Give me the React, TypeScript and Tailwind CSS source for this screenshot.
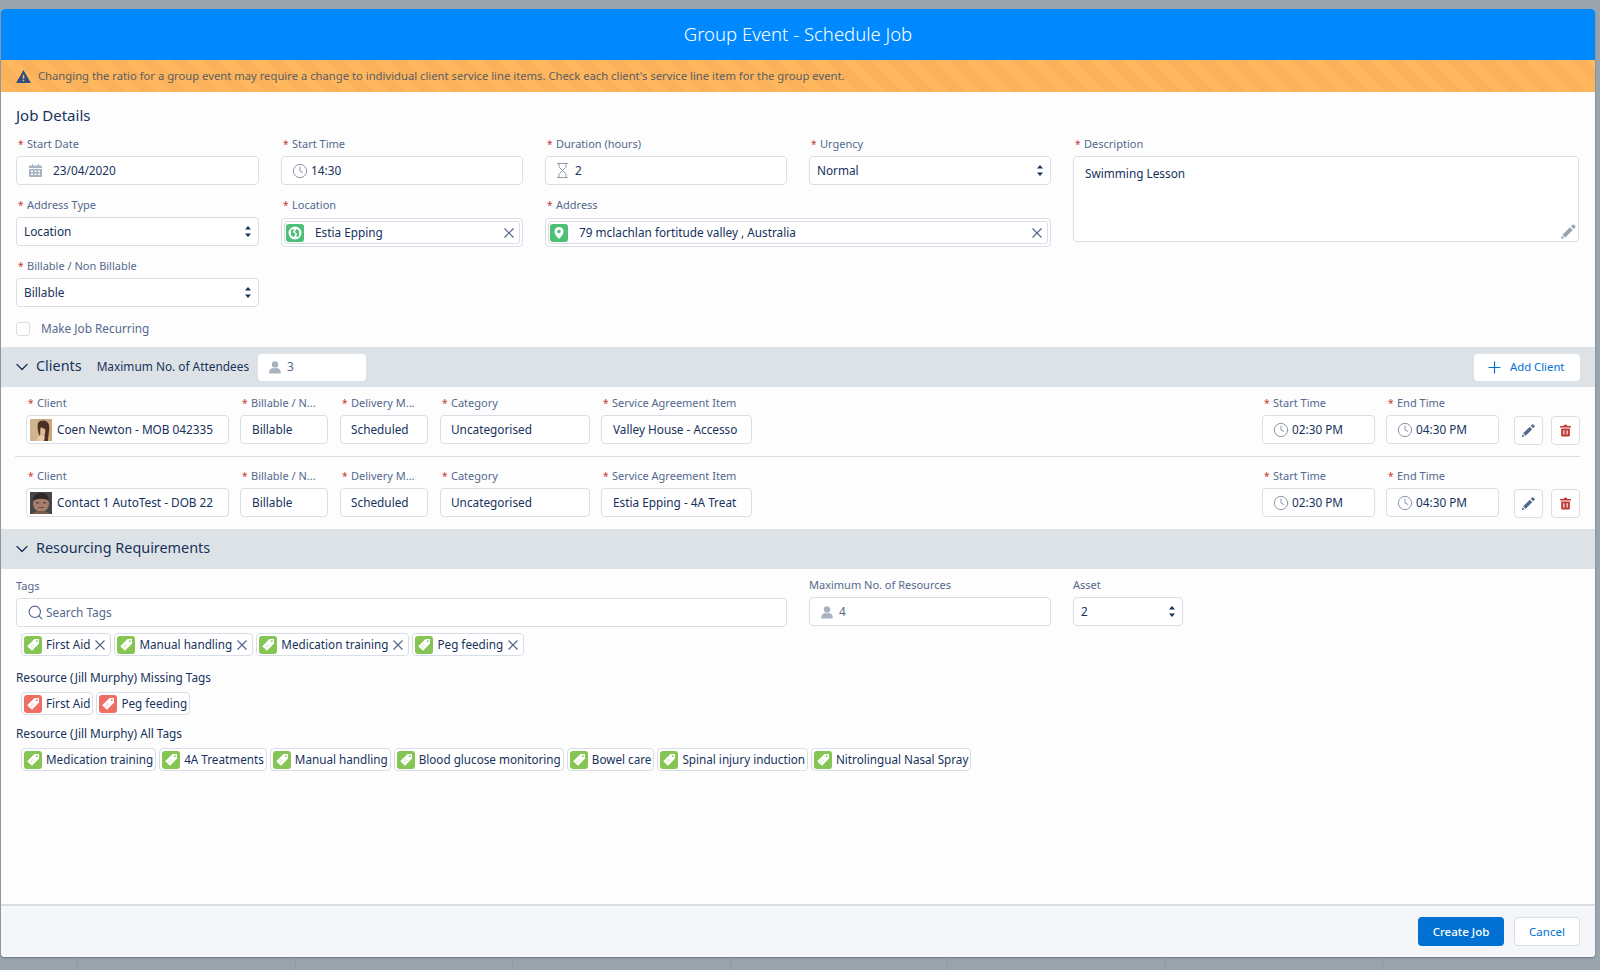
import { ChevronDown, Clock, Hourglass, Plus, Search } from "lucide-react";
import type { ReactNode } from "react";

function UserIcon({ className = "" }: { className?: string }) {
  return (
    <svg viewBox="0 0 24 24" className={className} fill="#a8b3c1">
      <circle cx="12" cy="7.500" r="5.500" />
      <path d="M2 22c0-5 2.500-7.500 7-8.500 1.800 1 4.200 1 6 0 4.500 1 7 3.500 7 8.500 0 .8-.5 1.200-1.200 1.200H3.200C2.500 23.200 2 22.800 2 22z" />
    </svg>
  );
}

function CloseIcon() {
  return (
    <svg viewBox="0 0 10 10" className="h-[10px] w-[10px] shrink-0" stroke="#54698d" strokeWidth="1.200" fill="none">
      <path d="M.5.5l9 9M9.500.5l-9 9" />
    </svg>
  );
}

function CalendarIcon() {
  return (
    <svg viewBox="0 0 13 13" className="h-[13px] w-[13px] shrink-0" fill="#a8b3c1">
      <path d="M3 0h1v1.500h5V0h1v1.500h2a1 1 0 0 1 1 1V4H0V2.500a1 1 0 0 1 1-1h2z" />
      <path d="M0 5h13v7a1 1 0 0 1-1 1H1a1 1 0 0 1-1-1z" />
      <path d="M2 6.500h2v1.500H2zM5.500 6.500h2v1.500h-2zM9 6.500h2v1.500H9zM2 9.500h2V11H2zM5.500 9.500h2V11h-2zM9 9.500h2V11H9z" fill="#fff" />
    </svg>
  );
}

function TagIcon({ color }: { color: string }) {
  return (
    <span className="flex h-[18px] w-[18px] shrink-0 items-center justify-center rounded-[3px]" style={{ backgroundColor: color }}>
      <svg viewBox="0 0 18 18" className="h-[18px] w-[18px]">
        <path d="M10.500 3 15 3 15 7.500 8 14.800 3.200 10.200z" fill="#fff" />
        <circle cx="12.800" cy="5.200" r="0.900" fill={color} />
        <path d="M6.800 10.200l1 1M8.400 8.600l1 1" stroke={color} strokeWidth="1" />
      </svg>
    </span>
  );
}

function Arrows() {
  return (
    <svg viewBox="0 0 6 13" className="h-[13px] w-[6px] shrink-0" fill="#16325c">
      <path d="M3 1 6 4.500H0zM3 12 0 8.500h6z" />
    </svg>
  );
}

function PencilIcon({ className = "" }: { className?: string }) {
  return (
    <svg viewBox="0 0 24 24" className={className} fill="currentColor">
      <path d="M17.500 2.500a1.500 1.500 0 0 1 2.100 0l1.900 1.900a1.500 1.500 0 0 1 0 2.100l-2 2-4-4zM14 6l4 4L7.500 20.500l-4-4zM2.700 18l3.300 3.300-4 1c-.4.100-.6-.1-.5-.5z" />
    </svg>
  );
}

function TrashIcon() {
  return (
    <svg viewBox="0 0 24 24" className="h-[13px] w-[13px]" fill="#c23934">
      <path d="M9 1.500h6V3.500h7V6.500H2V3.500h7zM4 8.500h16V21a2 2 0 0 1-2 2H6a2 2 0 0 1-2-2z" />
      <path d="M8 11.500h2v8H8zM14 11.500h2v8h-2z" fill="#fff" />
    </svg>
  );
}

function FieldLabel({ children, required = true }: { children: ReactNode; required?: boolean }) {
  return (
    <div className="flex h-[23px] items-center whitespace-nowrap pb-px text-[11px] text-[#54698d]">
      {required && <span className="w-[11px] pl-[2px] text-[10px] text-[#c23934]">*</span>}
      {children}
    </div>
  );
}

function Box({ children, className = "" }: { children?: ReactNode; className?: string }) {
  return (
    <div className={`flex h-[29px] items-center overflow-hidden whitespace-nowrap rounded-[4px] border border-[#d8dde6] bg-white text-[11.800px] text-[#16325c] ${className}`}>
      {children}
    </div>
  );
}

function Select({ value }: { value: string }) {
  return (
    <Box className="justify-between pl-[7px] pr-[7px]">
      {value}
      <Arrows />
    </Box>
  );
}

function Lookup({ icon, value }: { icon: ReactNode; value: string }) {
  return (
    <div className="-mb-px mt-px h-[29px] rounded-[4px] border border-[#d8dde6] bg-white p-[2px]">
      <div className="flex h-full items-center rounded-[3px] border border-[#d8dde6] pl-[1px] pr-[5px] text-[11.800px] text-[#16325c]">
        <span className="flex h-[18px] w-[18px] shrink-0 items-center justify-center rounded-[3px] bg-[#4bc076]">{icon}</span>
        <span className="ml-[11px] flex-1">{value}</span>
        <CloseIcon />
      </div>
    </div>
  );
}

function Tag({ label, color = "#84c553", removable = false }: { label: string; color?: string; removable?: boolean }) {
  return (
    <div className="flex h-[23px] items-center rounded-[4px] border border-[#d8dde6] bg-white pl-[2px] pr-[2px] text-[11.700px] text-[#16325c]">
      <TagIcon color={color} />
      <span className="ml-[4px] whitespace-nowrap">{label}</span>
      {removable && (
        <span className="ml-[5px] mr-[3px]">
          <CloseIcon />
        </span>
      )}
    </div>
  );
}

function SectionBar({ title, children }: { title: string; children?: ReactNode }) {
  return (
    <div className="flex h-[40px] shrink-0 items-center bg-[#dde2e6] pl-[11px] pr-[15px]">
      <ChevronDown className="h-[20px] w-[20px] text-[#16325c]" strokeWidth={1.500} />
      <span className="ml-[4px] pb-[2px] text-[14.400px] text-[#16325c]">{title}</span>
      {children}
    </div>
  );
}

function Avatar({ kind }: { kind: "woman" | "man" }) {
  if (kind === "woman") {
    return (
      <svg viewBox="0 0 22 22" className="h-[22px] w-[22px] shrink-0">
        <rect width="22" height="22" fill="#c9a67c" />
        <path d="M0 0h8v22H0z" fill="#d2b48c" />
        <path d="M8 4c3-4 10-3 11 2 1 5-1 10-1 16h-5c1-3 3-8 2-12-2 0-3-1-4-2-1 4-1 6-1 9-2-3-3-9-2-13z" fill="#4a2f26" />
        <path d="M11 8c1 1 2 2 4 2 .5 3-.5 6-2 6s-3-3-2-8z" fill="#e4b899" />
        <path d="M7 22c0-4 2-6 5-6s3 3 2 6z" fill="#e9c7ab" />
      </svg>
    );
  }
  return (
    <svg viewBox="0 0 22 22" className="h-[22px] w-[22px] shrink-0">
      <rect width="22" height="22" fill="#45464a" />
      <ellipse cx="11" cy="11.500" rx="8" ry="8.500" fill="#a67f6d" />
      <path d="M3 9c0-6 4-8 8-8s8 2 8 8c-4-3-12-3-16 0z" fill="#2f2a29" />
      <path d="M6 10h3v1.500H6zM13 10h3v1.500h-3z" fill="#5c463d" />
      <path d="M8 15h6v1H8z" fill="#6e4e42" />
      <path d="M2 22c1-2 4-3 9-3s8 1 9 3z" fill="#7d5c50" />
    </svg>
  );
}

const clients = [
  { name: "Coen Newton - MOB 042335", item: "Valley House - Accesso", kind: "woman" as const },
  { name: "Contact 1 AutoTest - DOB 22", item: "Estia Epping - 4A Treat", kind: "man" as const },
];

const selectedTags = ["First Aid", "Manual handling", "Medication training", "Peg feeding"];
const missingTags = ["First Aid", "Peg feeding"];
const allTags = [
  "Medication training",
  "4A Treatments",
  "Manual handling",
  "Blood glucose monitoring",
  "Bowel care",
  "Spinal injury induction",
  "Nitrolingual Nasal Spray",
];

const backdropCells = [1, 2, 3, 4, 5, 6, 7];

function ClientRow({ name, item, kind }: { name: string; item: string; kind: "woman" | "man" }) {
  return (
    <div className="flex pl-[11px]">
      <div className="w-[203px]">
        <FieldLabel>Client</FieldLabel>
        <Box className="pl-[3px]">
          <Avatar kind={kind} />
          <span className="ml-[5px] w-[157px] overflow-hidden">{name}</span>
        </Box>
      </div>
      <div className="ml-[11px] w-[88px]">
        <FieldLabel>Billable / N...</FieldLabel>
        <Box className="pl-[11px]">Billable</Box>
      </div>
      <div className="ml-[12px] w-[88px]">
        <FieldLabel>Delivery M...</FieldLabel>
        <Box className="pl-[10px]">Scheduled</Box>
      </div>
      <div className="ml-[12px] w-[150px]">
        <FieldLabel>Category</FieldLabel>
        <Box className="pl-[10px]">Uncategorised</Box>
      </div>
      <div className="ml-[11px] w-[151px]">
        <FieldLabel>Service Agreement Item</FieldLabel>
        <Box className="pl-[11px]">
          <span className="w-[127px] overflow-hidden">{item}</span>
        </Box>
      </div>
      <div className="ml-[510px] w-[113px]">
        <FieldLabel>Start Time</FieldLabel>
        <Box className="pl-[10px]">
          <Clock className="mr-[3px] h-[16px] w-[16px] text-[#8a96a8]" strokeWidth={1.500} />
          02:30 PM
        </Box>
      </div>
      <div className="ml-[11px] w-[113px]">
        <FieldLabel>End Time</FieldLabel>
        <Box className="pl-[10px]">
          <Clock className="mr-[3px] h-[16px] w-[16px] text-[#8a96a8]" strokeWidth={1.500} />
          04:30 PM
        </Box>
      </div>
      <div className="ml-[15px] mt-[24px] flex h-[29px] w-[29px] items-center justify-center rounded-[4px] border border-[#d8dde6] bg-white text-[#54698d]">
        <PencilIcon className="h-[15px] w-[15px]" />
      </div>
      <div className="ml-[8px] mt-[24px] flex h-[29px] w-[29px] items-center justify-center rounded-[4px] border border-[#d8dde6] bg-white">
        <TrashIcon />
      </div>
    </div>
  );
}

export default function App() {
  return (
    <div className="flex h-[970px] w-[1600px] flex-col overflow-hidden bg-[#9aa4ad] pt-[9px] pl-px font-['Noto_Sans','Liberation_Sans',sans-serif]">
      <div className="flex h-[948px] w-[1594px] shrink-0 flex-col overflow-hidden rounded-[4px] bg-[#fdfdfd] shadow-[0_1px_2px_rgba(0,0,0,0.3)]">
        <div className="flex h-[51px] shrink-0 items-center justify-center bg-[#0089ff] pb-px text-[18.500px] font-light text-white">
          Group Event - Schedule Job
        </div>
        <div className="flex h-[32px] shrink-0 items-center bg-[repeating-linear-gradient(45deg,#ffb75d_0,#ffb75d_11px,#f9b15c_11px,#f9b15c_22px)] pl-[15px] text-[11.250px] text-[#5b5d63]">
          <svg viewBox="0 0 16 14" className="mr-[7px] h-[13px] w-[15px]">
            <path d="M8 0 16 14H0z" fill="#2f4f7f" />
            <path d="M7.200 5h1.600v4.500H7.200zM7.200 10.500h1.600V12H7.200z" fill="#ffb75d" />
          </svg>
          Changing the ratio for a group event may require a change to individual client service line items. Check each client's service line item for the group event.
        </div>

        {/* Job Details */}
        <div className="shrink-0 pl-[15px]">
          <div className="pt-[11px] text-[15px] leading-[24px] text-[#16325c]">Job Details</div>
          <div className="mt-[6px] grid grid-cols-[243px_242px_242px_242px_506px] gap-x-[22px] gap-y-[9px]">
            <div>
              <FieldLabel>Start Date</FieldLabel>
              <Box className="pl-[12px]">
                <span className="mr-[11px]">
                  <CalendarIcon />
                </span>
                23/04/2020
              </Box>
            </div>
            <div>
              <FieldLabel>Start Time</FieldLabel>
              <Box className="pl-[10px]">
                <Clock className="mr-[3px] h-[16px] w-[16px] text-[#8a96a8]" strokeWidth={1.500} />
                14:30
              </Box>
            </div>
            <div>
              <FieldLabel>Duration (hours)</FieldLabel>
              <Box className="pl-[8px]">
                <Hourglass className="mr-[4px] h-[17px] w-[17px] text-[#8a96a8]" strokeWidth={1.400} />2
              </Box>
            </div>
            <div>
              <FieldLabel>Urgency</FieldLabel>
              <Select value="Normal" />
            </div>
            <div className="row-span-2">
              <FieldLabel>Description</FieldLabel>
              <div className="relative h-[86px] rounded-[4px] border border-[#d8dde6] bg-white pl-[11px] pt-[8px] text-[11.800px] text-[#16325c]">
                Swimming Lesson
                <PencilIcon className="absolute bottom-[1px] right-[1px] h-[17px] w-[17px] text-[#9aa4b2]" />
              </div>
            </div>
            <div>
              <FieldLabel>Address Type</FieldLabel>
              <Select value="Location" />
            </div>
            <div>
              <FieldLabel>Location</FieldLabel>
              <Lookup
                value="Estia Epping"
                icon={
                  <svg viewBox="0 0 18 18" className="h-[18px] w-[18px]">
                    <circle cx="9" cy="9" r="6.500" fill="#fff" />
                    <path d="M5 5.500h3.500L6.800 8l2.700 2-1.500 3-3-1.500zM13 12.500H9.800L11.300 10 8.800 8l1.500-3 2.700 1.500z" fill="#4bc076" />
                  </svg>
                }
              />
            </div>
            <div className="col-span-2">
              <FieldLabel>Address</FieldLabel>
              <Lookup
                value="79 mclachlan fortitude valley , Australia"
                icon={
                  <svg viewBox="0 0 18 18" className="h-[18px] w-[18px]">
                    <path d="M9 3a4.500 4.500 0 0 0-4.500 4.500C4.500 11 9 15 9 15s4.500-4 4.500-7.500A4.500 4.500 0 0 0 9 3z" fill="#fff" />
                    <circle cx="9" cy="7.500" r="1.700" fill="#4bc076" />
                  </svg>
                }
              />
            </div>
            <div>
              <FieldLabel>Billable / Non Billable</FieldLabel>
              <Select value="Billable" />
            </div>
          </div>
          <div className="mb-[11px] mt-[15px] flex h-[14px] items-center text-[11.800px] text-[#54698d]">
            <span className="h-[14px] w-[14px] rounded-[3px] border border-[#d8dde6] bg-white" />
            <span className="ml-[11px] pb-px">Make Job Recurring</span>
          </div>
        </div>

        {/* Clients */}
        <SectionBar title="Clients">
          <span className="ml-[15px] text-[11.850px] text-[#16325c]">Maximum No. of Attendees</span>
          <div className="ml-[9px] flex h-[27px] w-[108px] items-center rounded-[4px] bg-white pl-[10px] text-[11.800px] text-[#54698d]">
            <UserIcon className="mr-[5px] h-[14px] w-[14px]" />3
          </div>
          <div className="ml-auto flex h-[27px] w-[106px] items-center rounded-[4px] bg-white pl-[11px] text-[11.300px] text-[#0070d2]">
            <Plus className="mr-[6px] h-[19px] w-[19px]" strokeWidth={1.500} />
            Add Client
          </div>
        </SectionBar>
        <div className="shrink-0 pb-[11px] pl-[14px] pt-[5px] pr-[15px]">
          <ClientRow {...clients[0]} />
          <div className="mb-[8px] mt-[11px] h-px bg-[#d8dde6]" />
          <ClientRow {...clients[1]} />
        </div>

        {/* Resourcing */}
        <SectionBar title="Resourcing Requirements" />
        <div className="flex-1 pl-[15px] pt-[5px]">
          <div className="flex">
            <div className="w-[771px] pt-px">
              <FieldLabel required={false}>Tags</FieldLabel>
              <Box className="pl-[10px] text-[#54698d]">
                <Search className="mr-[2px] h-[17px] w-[17px] text-[#54698d]" strokeWidth={1.600} />
                Search Tags
              </Box>
            </div>
            <div className="ml-[22px] w-[242px]">
              <FieldLabel required={false}>Maximum No. of Resources</FieldLabel>
              <Box className="pl-[10px] text-[#54698d]">
                <UserIcon className="mr-[5px] h-[14px] w-[14px]" />4
              </Box>
            </div>
            <div className="ml-[22px] w-[110px]">
              <FieldLabel required={false}>Asset</FieldLabel>
              <Select value="2" />
            </div>
          </div>
          <div className="ml-[5px] mt-[6px] flex gap-[3px]">
            {selectedTags.map((t) => (
              <Tag key={t} label={t} removable />
            ))}
          </div>
          <div className="mt-[12px] flex h-[20px] items-center text-[11.800px] text-[#16325c]">Resource (Jill Murphy) Missing Tags</div>
          <div className="ml-[5px] mt-[4px] flex gap-[3px]">
            {missingTags.map((t) => (
              <Tag key={t} label={t} color="#ef6e64" />
            ))}
          </div>
          <div className="mt-[9px] flex h-[20px] items-center text-[11.800px] text-[#16325c]">Resource (Jill Murphy) All Tags</div>
          <div className="ml-[5px] mt-[4px] flex gap-[3px]">
            {allTags.map((t) => (
              <Tag key={t} label={t} />
            ))}
          </div>
        </div>

        {/* Footer */}
        <div className="flex h-[53px] shrink-0 items-center justify-end gap-[10px] border-t-2 border-[#d8dde6] bg-[#f4f6f9] pr-[15px]">
          <div className="flex h-[29px] w-[86px] items-center justify-center rounded-[4px] bg-[#0070d2] text-[11.500px] font-medium text-white">Create Job</div>
          <div className="flex h-[29px] w-[66px] items-center justify-center rounded-[4px] border border-[#d8dde6] bg-white text-[11.500px] text-[#0070d2]">Cancel</div>
        </div>
      </div>

      {/* table grid of the page behind the modal */}
      <div className="ml-[76px] flex h-[13px] shrink-0">
        {backdropCells.map((c) => (
          <div key={c} className="w-[220px] border-l border-[#8f9aa3]" />
        ))}
      </div>
    </div>
  );
}
